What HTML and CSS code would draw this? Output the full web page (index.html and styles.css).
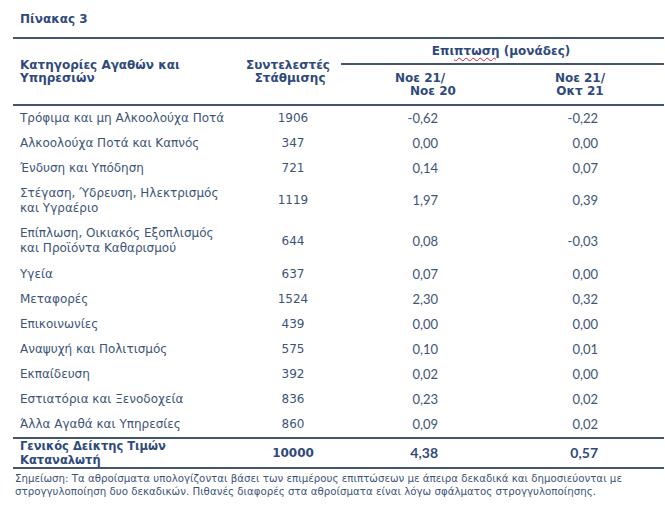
FILE: index.html
```html
<!DOCTYPE html>
<html lang="el">
<head>
<meta charset="utf-8">
<link rel="stylesheet" href="styles.css">
</head>
<body>
<div class="page">
  <div class="title">Πίνακας 3</div>
  <table class="tbl">
    <colgroup>
      <col class="c1"><col class="c2"><col class="c3"><col class="c4">
    </colgroup>
    <thead>
      <tr class="h1">
        <th class="cat" rowspan="2">Κατηγορίες Αγαθών και<br>Υπηρεσιών</th>
        <th class="w" rowspan="2">Συντελεστές<br>&nbsp;Στάθμισης</th>
        <th class="imp" colspan="2">Επι<span class="sq">πτωση</span> (μονάδες)</th>
      </tr>
      <tr class="h2">
        <th class="p3"><span class="hl">Νοε 21/</span><br><span class="hl2">Νοε 20</span></th>
        <th class="p4">Νοε 21/<br>Οκτ 21</th>
      </tr>
    </thead>
    <tbody>
      <tr><td class="cat">Τρόφιμα και μη Αλκοολούχα Ποτά</td><td class="w">1906</td><td class="n3">-0,62</td><td class="n4">-0,22</td></tr>
      <tr><td class="cat">Αλκοολούχα Ποτά και Καπνός</td><td class="w">347</td><td class="n3">0,00</td><td class="n4">0,00</td></tr>
      <tr><td class="cat">Ένδυση και Υπόδηση</td><td class="w">721</td><td class="n3">0,14</td><td class="n4">0,07</td></tr>
      <tr class="r2a"><td class="cat">Στέγαση, Ύδρευση, Ηλεκτρισμός<br>και Υγραέριο</td><td class="w">1119</td><td class="n3">1,97</td><td class="n4">0,39</td></tr>
      <tr class="r2b"><td class="cat">Επίπλωση, Οικιακός Εξοπλισμός<br>και Προϊόντα Καθαρισμού</td><td class="w">644</td><td class="n3">0,08</td><td class="n4">-0,03</td></tr>
      <tr><td class="cat">Υγεία</td><td class="w">637</td><td class="n3">0,07</td><td class="n4">0,00</td></tr>
      <tr><td class="cat">Μεταφορές</td><td class="w">1524</td><td class="n3">2,30</td><td class="n4">0,32</td></tr>
      <tr><td class="cat">Επικοινωνίες</td><td class="w">439</td><td class="n3">0,00</td><td class="n4">0,00</td></tr>
      <tr><td class="cat">Αναψυχή και Πολιτισμός</td><td class="w">575</td><td class="n3">0,10</td><td class="n4">0,01</td></tr>
      <tr><td class="cat">Εκπαίδευση</td><td class="w">392</td><td class="n3">0,02</td><td class="n4">0,00</td></tr>
      <tr><td class="cat">Εστιατόρια και Ξενοδοχεία</td><td class="w">836</td><td class="n3">0,23</td><td class="n4">0,02</td></tr>
      <tr><td class="cat">Άλλα Αγαθά και Υπηρεσίες</td><td class="w">860</td><td class="n3">0,09</td><td class="n4">0,02</td></tr>
    </tbody>
    <tfoot>
      <tr class="tot"><td class="cat">Γενικός Δείκτης Τιμών<br>Καταναλωτή</td><td class="w">10000</td><td class="n3">4,38</td><td class="n4">0,57</td></tr>
    </tfoot>
  </table>
  <p class="note">Σημείωση: Τα αθροίσματα υπολογίζονται βάσει των επιμέρους επιπτώσεων με άπειρα δεκαδικά και δημοσιεύονται με<br>στρογγυλοποίηση δυο δεκαδικών. Πιθανές διαφορές στα αθροίσματα είναι λόγω σφάλματος στρογγυλοποίησης.</p>
</div>
</body>
</html>
```
FILE: styles.css
```css
html, body {
  margin: 0;
  padding: 0;
  background: #ffffff;
}
.page {
  padding: 9px 1px 0 13px;
  font-family: "DejaVu Sans", Verdana, sans-serif;
  color: #3d5478;
}
.title {
  font-size: 12px;
  font-weight: bold;
  color: #2f4a7a;
  padding-left: 7px;
  height: 28px;
  line-height: 20px;
}
.tbl {
  width: 651px;
  border-collapse: collapse;
  table-layout: fixed;
  border-top: 2px solid #44546a;
}
.c1 { width: 222px; }
.c2 { width: 106px; }
.c3 { width: 164px; }
.c4 { width: 159px; }
th {
  font-size: 12px;
  font-weight: bold;
  color: #2f4a7a;
  line-height: 13px;
  padding: 0;
}
th.cat {
  text-align: left;
  padding-left: 7px;
  vertical-align: middle;
}
th.w { text-align: center; }
.h1 { height: 26px; }
.h2 { height: 41px; }
th.imp {
  border-bottom: 2px solid #44546a;
  text-align: center;
  padding-right: 3px;
}
.sq {
  text-decoration: underline wavy #e02020;
  text-decoration-thickness: 1px;
  text-underline-offset: 2px;
}
th.p3 { text-align: left; padding-left: 54px; }
th.p3 .hl2 { padding-left: 15px; }
th.p4 { text-align: center; padding-right: 9px; }
thead tr.h2 th, thead th.cat, thead th.w { border-bottom: 2px solid #44546a; }
td {
  font-size: 12px;
  line-height: 15px;
  padding: 0;
  height: 25px;
  vertical-align: middle;
}
td.cat { padding-left: 7px; }
td.w { text-align: center; padding-left: 10px; }
td.n3, td.n4 {
  font-family: "Lato", "Open Sans", sans-serif;
  font-size: 13px;
  text-align: right;
}
td.n3 { padding-right: 67px; }
td.n4 { padding-right: 66px; }
.r2a td { height: 39px; }
.r2b td { height: 42px; }
.tot td {
  height: 26px;
  font-weight: bold;
  color: #2f4a7a;
  border-top: 2px solid #44546a;
  border-bottom: 2px solid #44546a;
  line-height: 14px;
}
.tot td.cat { font-size: 11.5px; }
.tot td.w { font-size: 12px; }
.tot td.n3, .tot td.n4 { font-size: 14px; }
.note {
  margin: 3px 0 0 0;
  font-size: 10.25px;
  line-height: 13px;
  padding-left: 2px;
  color: #3d5478;
}
```
